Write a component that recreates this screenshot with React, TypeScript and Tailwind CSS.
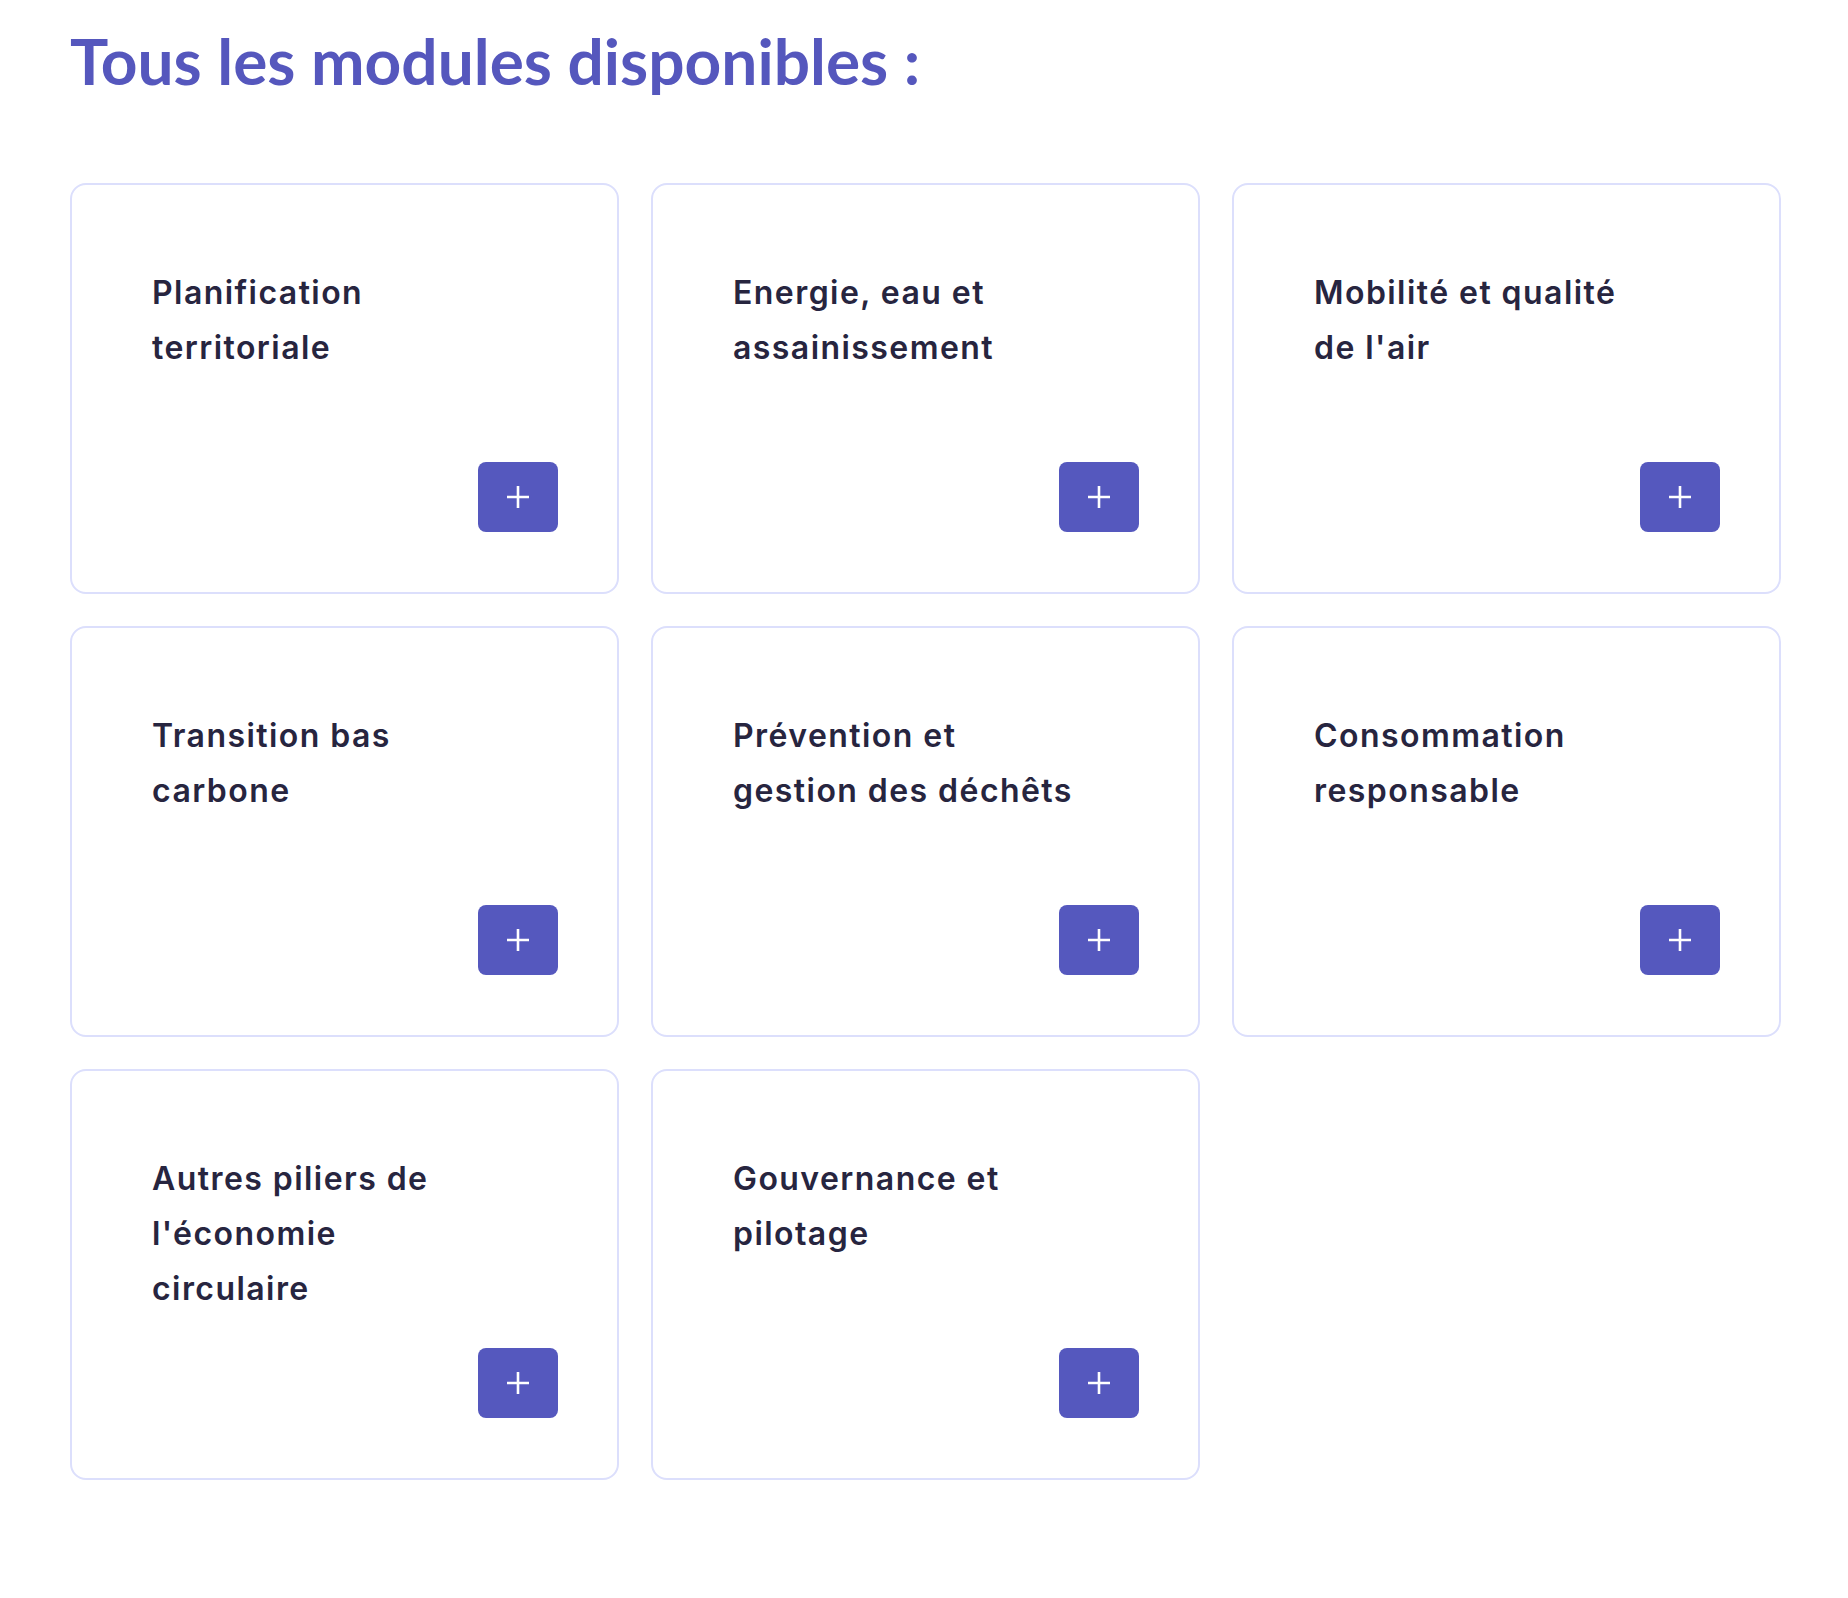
import React from "react";

const modules: string[][] = [
  ["Planification", "territoriale"],
  ["Energie, eau et", "assainissement"],
  ["Mobilité et qualité", "de l'air"],
  ["Transition bas", "carbone"],
  ["Prévention et", "gestion des déchêts"],
  ["Consommation", "responsable"],
  ["Autres piliers de", "l'économie", "circulaire"],
  ["Gouvernance et", "pilotage"],
];

function PlusIcon() {
  return (
    <svg width="24" height="24" viewBox="0 0 24 24" fill="none">
      <path d="M12 1v22M1 12h22" stroke="white" strokeWidth="2.6" />
    </svg>
  );
}

function ModuleCard({ lines }: { lines: string[] }) {
  return (
    <div className="flex h-[411px] flex-col justify-between rounded-2xl border-2 border-[#dcdffc] bg-white pb-[60px] pl-[80px] pr-[59px] pt-[80px]">
      <div className="font-['Inter',sans-serif] text-[32px] font-semibold leading-[55px] tracking-[0.045em] text-[#27253f]">
        {lines.map((line, i) => (
          <div key={i}>{line}</div>
        ))}
      </div>
      <button className="ml-auto flex h-[70px] w-[80px] items-center justify-center rounded-lg bg-[#5558be]">
        <PlusIcon />
      </button>
    </div>
  );
}

export default function App() {
  return (
    <div
      className="min-h-[1598px] bg-white pl-[70px] pr-[67px] pt-[29px]"
      style={{ fontFamily: "Lato, 'Noto Sans', sans-serif" }}
    >
      <h1 className="text-[64px] font-bold leading-none text-[#5557bd]">
        Tous les modules disponibles :
      </h1>
      <div className="mt-[90px] grid grid-cols-3 gap-8">
        {modules.map((lines, i) => (
          <ModuleCard key={i} lines={lines} />
        ))}
      </div>
    </div>
  );
}
